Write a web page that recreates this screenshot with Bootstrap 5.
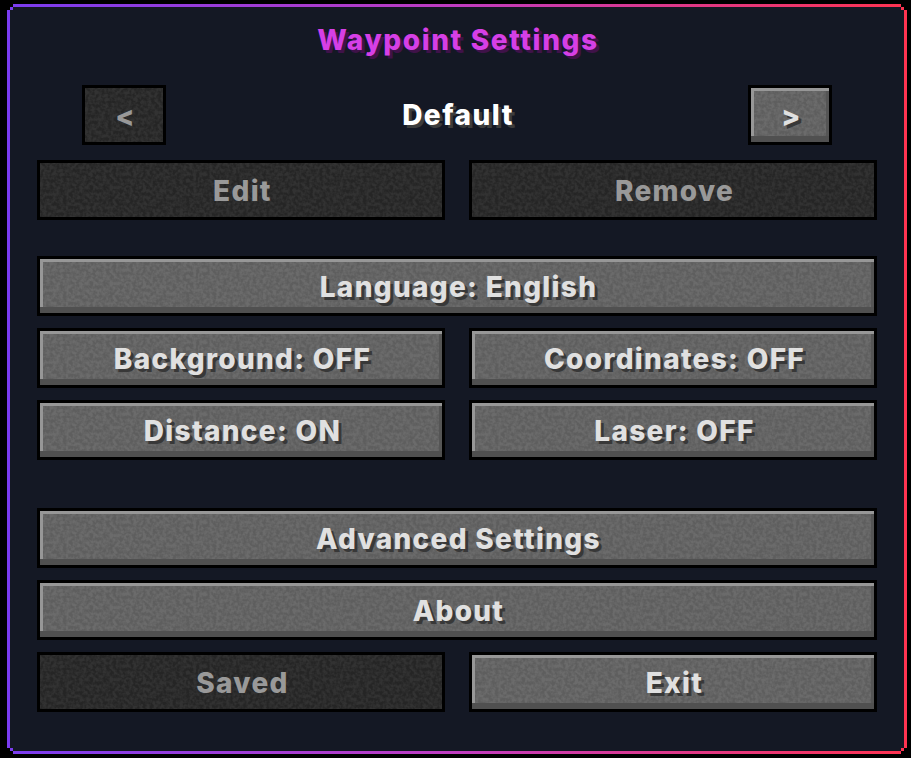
<!DOCTYPE html>
<html lang="en">
<head>
<meta charset="utf-8">
<title>Waypoint Settings</title>
<link href="https://cdn.jsdelivr.net/npm/bootstrap@5.3.0/dist/css/bootstrap.min.css" rel="stylesheet">
<style>
html, body { height: 100%; }
body { background: #000; margin: 0; padding: 4px 4px 4px 7px; overflow: hidden; font-family: "Inter", "Liberation Sans", sans-serif; }
.wp-frame { width: 900px; height: 750px; padding: 3px; background: linear-gradient(90deg, #7a3cf0 0%, #c03cc0 50%, #ff3350 100%);
  clip-path: polygon(6px 0, calc(100% - 6px) 0, calc(100% - 6px) 3px, calc(100% - 3px) 3px, calc(100% - 3px) 6px, 100% 6px, 100% calc(100% - 6px), calc(100% - 3px) calc(100% - 6px), calc(100% - 3px) calc(100% - 3px), calc(100% - 6px) calc(100% - 3px), calc(100% - 6px) 100%, 6px 100%, 6px calc(100% - 3px), 3px calc(100% - 3px), 3px calc(100% - 6px), 0 calc(100% - 6px), 0 6px, 3px 6px, 3px 3px, 6px 3px); }
.wp-panel { height: 100%; background: #141824; padding: 0 27px;
  clip-path: polygon(3px 0, calc(100% - 3px) 0, calc(100% - 3px) 3px, 100% 3px, 100% calc(100% - 3px), calc(100% - 3px) calc(100% - 3px), calc(100% - 3px) 100%, 3px 100%, 3px calc(100% - 3px), 0 calc(100% - 3px), 0 3px, 3px 3px); }
.wp-title { height: 66px; padding: 18px 0 0 2px; margin: 0; font-size: 28px; line-height: 30px; font-weight: 800; color: #d63fe6; text-align: center; text-shadow: 3px 3px 0 #3f1249; letter-spacing: 1.6px; }
.wp-nav { height: 60px; margin: 12px 45px 0; }
.wp-name { font-size: 28px; font-weight: 800; letter-spacing: 1.5px; color: #fff; padding-left: 2px; text-shadow: 3px 3px 0 #3c3c3c; }
.wp-row { display: flex; gap: 24px; }
.wp-g12 { margin-top: 12px; }
.wp-g15 { margin-top: 15px; }
.wp-g36 { margin-top: 36px; }
.wp-g48 { margin-top: 48px; }
.wp-btn { flex: 1 1 0; min-width: 0; height: 60px; padding: 2px 0 0 3px; border: 3px solid #000; border-radius: 0; font-size: 28px; font-weight: 800; letter-spacing: 1.3px; line-height: 1; color: #e0e0e0; text-shadow: 3px 3px 0 #383838;
  background-color: #636363;
  background-image: url("data:image/svg+xml,%3Csvg xmlns='http://www.w3.org/2000/svg' width='300' height='120'%3E%3Cfilter id='n' color-interpolation-filters='sRGB'%3E%3CfeTurbulence type='fractalNoise' baseFrequency='.3' numOctaves='2' seed='3'/%3E%3CfeColorMatrix values='3 0 0 0 -1 3 0 0 0 -1 3 0 0 0 -1 0 0 0 0 .05'/%3E%3C/filter%3E%3Crect width='300' height='120' filter='url(%23n)'/%3E%3C/svg%3E");
  box-shadow: inset 0 -6px 0 #505050, inset 3px 3px 0 #979797, inset -3px 0 0 #555; }
.wp-btn:hover, .wp-btn:active, .wp-btn:disabled { border-color: #000; }
.wp-btn:hover { color: #e0e0e0; background-color: #636363; }
.wp-btn:disabled, .wp-btn.disabled { opacity: 1; color: #999; text-shadow: none; background-color: #272727; box-shadow: none; }
.wp-narrow { flex: 0 0 84px; }
</style>
</head>
<body>
<div class="wp-frame">
  <div class="wp-panel">
    <h1 class="wp-title">Waypoint Settings</h1>
    <div class="wp-nav d-flex align-items-center justify-content-between">
      <button type="button" class="btn wp-btn wp-narrow" disabled>&lt;</button>
      <span class="wp-name">Default</span>
      <button type="button" class="btn wp-btn wp-narrow">&gt;</button>
    </div>
    <div class="wp-row wp-g15">
      <button type="button" class="btn wp-btn" disabled>Edit</button>
      <button type="button" class="btn wp-btn" disabled>Remove</button>
    </div>
    <div class="wp-row wp-g36">
      <button type="button" class="btn wp-btn">Language: English</button>
    </div>
    <div class="wp-row wp-g12">
      <button type="button" class="btn wp-btn">Background: OFF</button>
      <button type="button" class="btn wp-btn">Coordinates: OFF</button>
    </div>
    <div class="wp-row wp-g12">
      <button type="button" class="btn wp-btn">Distance: ON</button>
      <button type="button" class="btn wp-btn">Laser: OFF</button>
    </div>
    <div class="wp-row wp-g48">
      <button type="button" class="btn wp-btn">Advanced Settings</button>
    </div>
    <div class="wp-row wp-g12">
      <button type="button" class="btn wp-btn">About</button>
    </div>
    <div class="wp-row wp-g12">
      <button type="button" class="btn wp-btn" disabled>Saved</button>
      <button type="button" class="btn wp-btn">Exit</button>
    </div>
  </div>
</div>
<script src="https://cdn.jsdelivr.net/npm/bootstrap@5.3.0/dist/js/bootstrap.bundle.min.js"></script>
</body>
</html>
